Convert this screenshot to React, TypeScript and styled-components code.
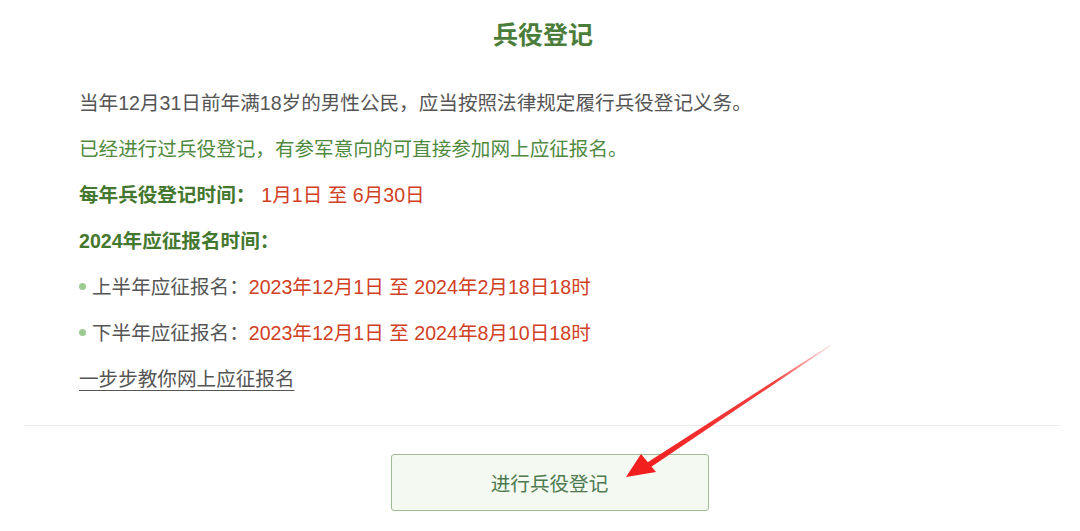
import React from "react";
import styled, { createGlobalStyle } from "styled-components";

const GlobalStyle = createGlobalStyle`
  html, body {
    margin: 0;
    padding: 0;
    background: #ffffff;
  }
  body {
    font-family: "Liberation Sans", "Noto Sans CJK SC", sans-serif;
  }
`;

const Page = styled.div`
  position: relative;
  width: 1080px;
  height: 531px;
  overflow: hidden;
  background: #ffffff;
`;

const Title = styled.h1`
  margin: 0;
  padding: 20px 0 0 6px;
  height: 30px;
  line-height: 30px;
  text-align: center;
  font-size: 25px;
  font-weight: 700;
  color: #4b7d3a;
`;

const Content = styled.div`
  padding: 38px 0 0 79px;
  display: flex;
  flex-direction: column;
`;

const Line = styled.p<{ $tone?: "gray" | "green" }>`
  margin: 0;
  height: 46px;
  line-height: 30px;
  font-size: 19.6px;
  color: ${({ $tone }) => ($tone === "green" ? "#4f8a3f" : "#555555")};
  white-space: nowrap;
`;

const Label = styled.strong`
  font-weight: 700;
  color: #45782f;
  margin-right: 6px;
`;

const Red = styled.span`
  color: #d1401f;
`;

const Bullet = styled.span`
  display: inline-block;
  width: 7px;
  height: 7px;
  margin: 0 6px 0 0;
  border-radius: 50%;
  background: #9ccb92;
  vertical-align: middle;
  position: relative;
  top: -2px;
`;

const Guide = styled.a`
  font-size: 19.6px;
  line-height: 30px;
  color: #555555;
  text-decoration: underline;
  text-underline-offset: 4px;
  cursor: pointer;
`;

const Divider = styled.hr`
  margin: 15px 20px 0 24px;
  border: none;
  border-top: 1px solid #ececec;
`;

const Footer = styled.div`
  display: flex;
  justify-content: center;
  padding-top: 28px;
  padding-left: 19px;
`;

const RegisterButton = styled.button`
  width: 318px;
  height: 57px;
  background: #f4f9f1;
  border: 1px solid #9ebd93;
  border-radius: 3px;
  font-family: "Liberation Sans", "Noto Sans CJK SC", sans-serif;
  font-size: 19.6px;
  color: #4d7a4f;
  cursor: pointer;
`;

const Arrow = styled.svg`
  position: absolute;
  left: 0;
  top: 0;
  pointer-events: none;
`;

export default function App() {
  return (
    <>
      <GlobalStyle />
      <Page>
        <Title>兵役登记</Title>
        <Content>
          <Line>当年12月31日前年满18岁的男性公民，应当按照法律规定履行兵役登记义务。</Line>
          <Line $tone="green">已经进行过兵役登记，有参军意向的可直接参加网上应征报名。</Line>
          <Line>
            <Label>每年兵役登记时间：</Label>
            <Red>1月1日 至 6月30日</Red>
          </Line>
          <Line>
            <Label>2024年应征报名时间：</Label>
          </Line>
          <Line>
            <Bullet />
            上半年应征报名：<Red>2023年12月1日 至 2024年2月18日18时</Red>
          </Line>
          <Line>
            <Bullet />
            下半年应征报名：<Red>2023年12月1日 至 2024年8月10日18时</Red>
          </Line>
          <Line>
            <Guide>一步步教你网上应征报名</Guide>
          </Line>
        </Content>
        <Divider />
        <Footer>
          <RegisterButton>进行兵役登记</RegisterButton>
        </Footer>
        <Arrow width="1080" height="531" viewBox="0 0 1080 531">
          <defs>
            <linearGradient id="shaft" x1="830" y1="345" x2="640" y2="466" gradientUnits="userSpaceOnUse">
              <stop offset="0" stopColor="#f43a3a" stopOpacity="0.15" />
              <stop offset="0.3" stopColor="#f22a2a" stopOpacity="0.9" />
              <stop offset="1" stopColor="#f21f1f" />
            </linearGradient>
          </defs>
          <polygon points="830,345 830.6,346 648,469 645,464" fill="url(#shaft)" />
          <polygon points="626,477 641,454 656,472" fill="#f21f1f" />
        </Arrow>
      </Page>
    </>
  );
}
